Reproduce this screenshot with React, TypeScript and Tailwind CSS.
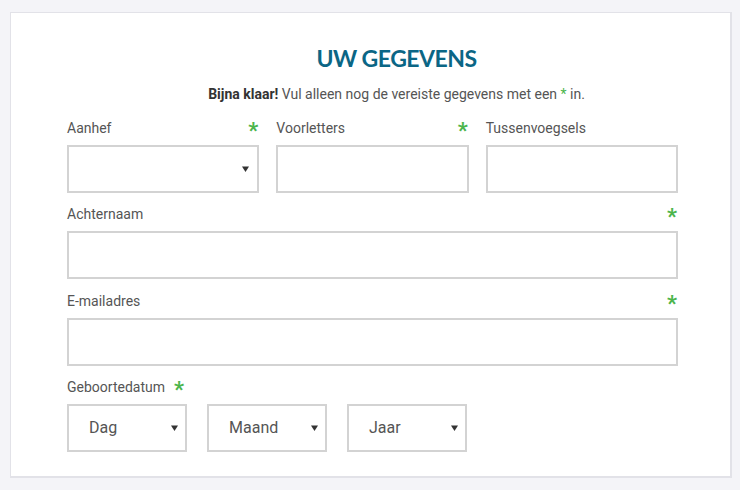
const Star = ({ className = '' }: { className?: string }) => (
  <span className={`text-[22px] font-bold leading-none text-[#4cb54c] ${className}`}>*</span>
);

const Arrow = () => (
  <svg width="7" height="6" viewBox="0 0 7 6" className="shrink-0">
    <path d="M0 0.5h7L3.5 6z" fill="#333" />
  </svg>
);

const Label = ({ text, required }: { text: string; required?: boolean }) => (
  <div className="flex h-5 items-center justify-between">
    <span className="text-[14px] text-[#555]">{text}</span>
    {required && <Star className="mt-[6px] mr-[1px]" />}
  </div>
);

const Box = ({ children, className = '' }: { children?: React.ReactNode; className?: string }) => (
  <div className={`mt-[7px] flex h-12 items-center border-2 border-[#d3d3d3] bg-white ${className}`}>{children}</div>
);

const DateSelect = ({ text }: { text: string }) => (
  <Box className="w-[120px] justify-between pl-5 pr-[7px]">
    <span className="text-[16px] text-[#555]">{text}</span>
    <Arrow />
  </Box>
);

export default function App() {
  return (
    <div className="min-h-[490px] bg-[#f4f4f8] pt-3 pl-[10px]" style={{ fontFamily: 'Roboto, "Liberation Sans", sans-serif' }}>
      <div className="w-[722px] h-[466px] border border-[#e2e2e8] border-r-2 border-b-2 bg-white pt-[29px] pl-[56px]">
        <div className="w-[611px] pl-12 text-center">
          <h1 className="text-[23px] font-bold leading-8 tracking-[-0.5px] text-[#0b6685]" style={{ fontFamily: 'Lato, sans-serif' }}>
            UW GEGEVENS
          </h1>
          <p className="mt-[10px] text-[14px] leading-5 text-[#555]">
            <b className="text-[#333]">Bijna klaar!</b> Vul alleen nog de vereiste gegevens met een{' '}
            <span className="text-[#4cb54c]">*</span> in.
          </p>
        </div>

        <div className="mt-[14px] w-[611px]">
          <div className="grid grid-cols-3 gap-x-[17px]">
            <div>
              <Label text="Aanhef" required />
              <Box className="justify-end pr-[8px]">
                <Arrow />
              </Box>
            </div>
            <div>
              <Label text="Voorletters" required />
              <Box />
            </div>
            <div>
              <Label text="Tussenvoegsels" />
              <Box />
            </div>
          </div>

          <div className="mt-[11px]">
            <Label text="Achternaam" required />
            <Box />
          </div>

          <div className="mt-[12px]">
            <Label text="E-mailadres" required />
            <Box />
          </div>

          <div className="mt-[11px]">
            <div className="flex h-5 items-center gap-[9px]">
              <span className="text-[14px] text-[#555]">Geboortedatum</span>
              <Star className="mt-[6px]" />
            </div>
            <div className="flex gap-5">
              <DateSelect text="Dag" />
              <DateSelect text="Maand" />
              <DateSelect text="Jaar" />
            </div>
          </div>
        </div>
      </div>
    </div>
  );
}
